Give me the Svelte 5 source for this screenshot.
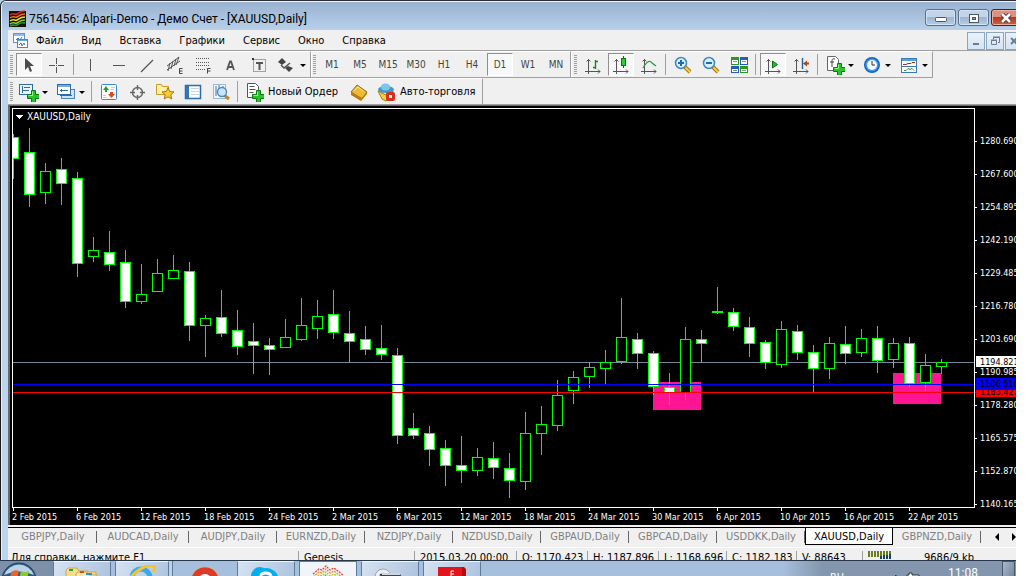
<script>
  const menus = ['Файл', 'Вид', 'Вставка', 'Графики', 'Сервис', 'Окно', 'Справка'];

  const drawTools = [
    { icon: 'cursor', label: 'Курсор', on: true },
    { icon: 'cross', label: 'Перекрестие' },
    { sep: true },
    { icon: 'vline', label: 'Вертикальная линия' },
    { icon: 'hline', label: 'Горизонтальная линия' },
    { icon: 'trend', label: 'Трендовая линия' },
    { icon: 'channel', label: 'Канал' },
    { icon: 'fibo', label: 'Фибоначчи' },
    { icon: 'letter', label: 'Текст' },
    { icon: 'textlabel', label: 'Метка' },
    { icon: 'arrows', label: 'Стрелки', drop: true }
  ];
  const frames = ['M1', 'M5', 'M15', 'M30', 'H1', 'H4', 'D1', 'W1', 'MN'];
  const chartTools = [
    { icon: 'bars', label: 'Бары' },
    { icon: 'candles', label: 'Свечи', on: true },
    { icon: 'line', label: 'Линия' },
    { sep: true },
    { icon: 'zoomin', label: 'Увеличить' },
    { icon: 'zoomout', label: 'Уменьшить' },
    { icon: 'tile', label: 'Расположить окна' },
    { sep: true },
    { icon: 'scroll', label: 'Автопрокрутка', on: true },
    { icon: 'shift', label: 'Сдвиг графика' },
    { sep: true },
    { icon: 'indicator', label: 'Индикаторы', drop: true },
    { icon: 'clock', label: 'Периоды', drop: true },
    { icon: 'template', label: 'Шаблоны', drop: true }
  ];
  const standardTools = [
    { icon: 'newchart', label: 'Новый график', drop: true },
    { icon: 'profiles', label: 'Профили', drop: true },
    { sep: true },
    { icon: 'market', label: 'Обзор рынка' },
    { icon: 'target', label: 'Окно данных' },
    { icon: 'navigator', label: 'Навигатор' },
    { icon: 'terminal', label: 'Терминал' },
    { icon: 'tester', label: 'Тестер' },
    { sep: true },
    { icon: 'order', text: 'Новый Ордер' },
    { icon: 'book', label: 'MetaEditor' },
    { icon: 'auto', text: 'Авто-торговля' }
  ];

  // high, body top, body bottom, low, falling (1), rising (0)
  const candles = [
    [134, 137, 159, 179, 1], [128, 152, 195, 207, 1], [163, 171, 193, 204, 0], [158, 169, 184, 205, 1],
    [172, 178, 264, 277, 1], [237, 250, 257, 262, 0], [231, 252, 265, 271, 1], [250, 262, 302, 308, 1],
    [264, 294, 302, 304, 0], [259, 273, 292, 292, 0], [255, 270, 279, 279, 0], [262, 271, 326, 341, 1],
    [315, 318, 326, 357, 0], [290, 317, 334, 337, 1], [310, 330, 347, 355, 1], [323, 341, 346, 374, 1],
    [338, 345, 350, 375, 1], [319, 337, 348, 348, 0], [298, 325, 340, 341, 0], [300, 316, 329, 339, 0],
    [290, 314, 333, 339, 1], [311, 333, 342, 362, 1], [326, 339, 350, 355, 1], [325, 348, 355, 360, 1],
    [348, 355, 436, 444, 1], [413, 428, 436, 439, 1], [426, 433, 450, 466, 1], [440, 448, 466, 486, 1],
    [436, 465, 471, 483, 1], [448, 457, 471, 476, 0], [442, 458, 468, 479, 1], [453, 468, 481, 498, 1],
    [412, 433, 482, 490, 0], [406, 424, 434, 455, 0], [380, 395, 426, 431, 0], [371, 377, 391, 404, 0],
    [362, 367, 377, 388, 0], [350, 362, 369, 384, 0], [298, 337, 362, 364, 0], [333, 339, 354, 369, 1],
    [351, 353, 387, 395, 1], [373, 387, 393, 405, 1], [327, 339, 393, 400, 0], [330, 339, 344, 363, 1],
    [287, 311, 313, 314, 1], [308, 312, 327, 331, 1], [317, 327, 344, 357, 1], [340, 342, 363, 369, 1],
    [321, 329, 365, 368, 0], [325, 331, 353, 360, 1], [345, 352, 369, 392, 1], [337, 343, 369, 379, 0],
    [326, 344, 354, 364, 1], [329, 338, 353, 357, 0], [326, 338, 361, 373, 1], [338, 343, 360, 368, 0],
    [337, 343, 384, 387, 1], [354, 365, 383, 391, 0], [359, 362, 367, 374, 0]
  ];
  const dates = ['2 Feb 2015', '6 Feb 2015', '12 Feb 2015', '18 Feb 2015', '24 Feb 2015', '2 Mar 2015', '6 Mar 2015',
    '12 Mar 2015', '18 Mar 2015', '24 Mar 2015', '30 Mar 2015', '6 Apr 2015', '10 Apr 2015', '16 Apr 2015', '22 Apr 2015'];
  const prices = ['1280.690', '1267.600', '1254.895', '1242.190', '1229.485', '1216.780', '1203.690', '1190.985',
    '1178.280', '1165.575', '1152.870', '1140.165'];

  const tabs = [
    ['GBPJPY', 88], ['AUDCAD', 92], ['AUDJPY', 88], ['EURNZD', 88], ['NZDJPY', 88], ['NZDUSD', 88],
    ['GBPAUD', 88], ['GBPCAD', 88], ['USDDKK', 88], ['XAUUSD', 88], ['GBPNZD', 88]
  ];
  const status = ['Для справки, нажмите F1', 'Genesis', '2015.03.20 00:00', 'O: 1170.423', 'H: 1187.896',
    'L: 1168.696', 'C: 1182.183', 'V: 88643', '9686/9 kb'];

  let frame = $state('D1');
  let tab = $state('XAUUSD');
</script>

{#snippet plus()}
  <path d="M12.5 8.5h4v4h4v4h-4v4h-4v-4h-4v-4h4z" fill="#27c52b" stroke="#087a10" /><path d="M13.5 9.5v4h-4" fill="none" stroke="#9cf08c" />
{/snippet}

{#snippet axes()}
  <path d="M5.5 4v15M2 16.5h15M3.5 6.500l2-2 2 2M15 14.5l2 2-2 2" fill="none" stroke="#555" />
{/snippet}

{#snippet icon(name)}
  <svg class="icon" width="20" height="20" viewBox="0 0 20 20" aria-hidden="true">
    {#if name === 'cursor'}
      <path d="M6 3v12l3-3 2 5 2-1-2-5h4z" fill="#4a4a4a" />
    {:else if name === 'cross'}
      <path d="M9.500 3v6M9.500 12v6M2 10.500h6M11 10.500h6" stroke="#555" fill="none" /><path d="M9 10h1v1h-1z" fill="#555" />
    {:else if name === 'vline'}
      <path d="M9.500 4v12" stroke="#555" />
    {:else if name === 'hline'}
      <path d="M4 10.500h12" stroke="#555" />
    {:else if name === 'trend'}
      <path d="M4 17L16 5" stroke="#555" stroke-width="1.200" />
    {:else if name === 'channel'}
      <path d="M2 11L14 2M2 15L15 6M5 8l-2 8M8 6l-2 8M11 4L9 11M14 2l-3 8" stroke="#555" fill="none" /><path d="M17.500 13.500h-3v5h3M14.500 16h3" stroke="#444" fill="none" />
    {:else if name === 'fibo'}
      <path d="M3 3.500h14M3 7.500h14M3 10.500h14M3 14.500h10" stroke="#555" stroke-dasharray="1 1" /><path d="M17.500 13.500h-3v5M14.500 16h3" stroke="#444" fill="none" />
    {:else if name === 'letter'}
      <path d="M6 15l3-8.500h1L13 15M7.500 12h4" stroke="#555" stroke-width="1.800" fill="none" />
    {:else if name === 'textlabel'}
      <rect x="4.500" y="4.500" width="12" height="12" fill="none" stroke="#555" stroke-dasharray="1 1" /><path d="M7 8h7M10.500 8v7" stroke="#555" stroke-width="2" /><path d="M3 3h2v2H3z" fill="#333" />
    {:else if name === 'arrows'}
      <path d="M1 7l4-4 4 4-4 3z" fill="#444" /><path d="M4 10l3 3 6-5" stroke="#555" fill="none" stroke-width="1.500" /><path d="M8 13l3-2 5 2-4 4z" fill="#444" />
    {:else if name === 'bars'}
      {@render axes()}<path d="M12.500 5v9M10 12.500h2M13 6.500h2" stroke="#138a1b" stroke-width="1.400" fill="none" />
    {:else if name === 'candles'}
      {@render axes()}<path d="M12.500 1v12" stroke="#0b7411" /><rect x="10.500" y="3.500" width="4" height="7" fill="#22d52b" stroke="#0b7411" />
    {:else if name === 'line'}
      {@render axes()}<path d="M4 13c4-7 7-8 9-5l4 3" stroke="#2b9a35" stroke-width="1.300" fill="none" />
    {:else if name === 'zoomin' || name === 'zoomout'}
      <path d="M12 12l5 5" stroke="#a87510" stroke-width="4" /><path d="M12 12l5 5" stroke="#f7cf45" stroke-width="2" />
      <circle cx="8" cy="8" r="5.500" fill="#d9efff" stroke="#3d86c8" stroke-width="1.500" /><path d="M5 8h6" stroke="#1f68b4" stroke-width="2" />
      {#if name === 'zoomin'}<path d="M8 5v6" stroke="#1f68b4" stroke-width="2" />{/if}
    {:else if name === 'tile'}
      <path d="M2 2h8v8H2zM11 11h8v7h-8z" fill="#2c9a20" /><path d="M11 2h8v8h-8zM2 11h8v7H2z" fill="#2558c8" />
      <path d="M3 5h6v4H3zM12 5h6v4h-6zM3 14h6v3H3zM12 14h6v3h-6z" fill="#fff" /><path d="M4 6.500h4M13 6.500h4M4 15.500h4M13 15.500h4" stroke="#7fa36c" />
    {:else if name === 'scroll'}
      {@render axes()}<path d="M9.500 6l5 3.500-5 3.500z" fill="#28b82f" stroke="#0b7411" />
    {:else if name === 'shift'}
      {@render axes()}<path d="M11.500 3v11" stroke="#225f9c" stroke-width="1.400" /><path d="M12 8.500l4-3v2h2v2h-2v2z" fill="#b8401a" />
    {:else if name === 'indicator'}
      <path d="M2.500 1.500h8l3 3v11h-11z" fill="#fff" stroke="#666" /><path d="M10 4c-3-1-3 1-3 3v5M5 7h4" stroke="#444" fill="none" />{@render plus()}
    {:else if name === 'clock'}
      <circle cx="10" cy="10" r="8" fill="#1464c4" /><circle cx="10" cy="10" r="6.500" fill="#3e9ae8" /><circle cx="10" cy="10" r="5" fill="#f4f9ff" /><path d="M10 6v4h3" stroke="#333" fill="none" />
    {:else if name === 'template'}
      <rect x="2.500" y="3.500" width="15" height="14" fill="#fff" stroke="#3b78b8" /><path d="M3 4h14v2H3z" fill="#5aa0e0" /><path d="M3 11.500h14" stroke="#3b78b8" />
      <path d="M4 9.500h3l2-1h3l1-1h3" stroke="#a0301c" fill="none" /><path d="M5 15.500h2l2-2 2 1 2-1 2 2" stroke="#2e8b3a" fill="none" />
    {:else if name === 'newchart'}
      <rect x=".5" y="2.500" width="13" height="10" fill="#eef6fd" stroke="#2f6ba6" /><path d="M3.500 4v7M3 8.500h7M5 5.500h6" stroke="#2f6ba6" fill="none" />{@render plus()}
    {:else if name === 'profiles'}
      <rect x="5.500" y="7.500" width="13" height="9" fill="#cfe4f7" stroke="#4a84bd" /><rect x="1.500" y="2.500" width="13" height="10" fill="#fff" stroke="#2f6ba6" /><path d="M2 3h12v2H2z" fill="#74aee4" /><path d="M4 8.500h8M5.500 7v3M4 13.500h12" stroke="#2f6ba6" />
    {:else if name === 'market'}
      <rect x="2.500" y="2.500" width="15" height="15" rx="1" fill="#fff" stroke="#3b87cf" /><path d="M4 8l3-4 3 4H8v2H6V8z" fill="#1da528" /><path d="M9 12h2v-2h3v2h2l-3.500 4z" fill="#e2451c" /><path d="M12 5.500h4M12 7.500h3M4 13.500h3M4 15.500h4" stroke="#ccc" />
    {:else if name === 'target'}
      <circle cx="10.500" cy="10.500" r="5" fill="none" stroke="#666" stroke-width="1.400" /><path d="M10.500 3v5M10.500 13v5M3 10.500h5M13 10.500h5" stroke="#666" stroke-width="1.400" />
    {:else if name === 'navigator'}
      <path d="M1.500 12.500v-10h5l1 2h6v8z" fill="#fff0a2" stroke="#c79b2c" /><path d="M13 5.500l1.800 4 4.200.4-3.200 2.900 1 4.200L13 14.800 9.200 17l1-4.200L7 9.900l4.200-.4z" fill="#f7ca35" stroke="#a87810" />
    {:else if name === 'terminal'}
      <rect x="2.500" y="3.500" width="15" height="13" fill="#fff" stroke="#2f6ba6" stroke-width="1.500" /><path d="M3 4h3v12H3z" fill="#3577b7" /><path d="M8 6.500h8M8 9.500h8M8 12.500h8" stroke="#c3d6e8" />
    {:else if name === 'tester'}
      <rect x="2.500" y="2.500" width="12" height="14" fill="#eef5fc" stroke="#9bb8d4" /><path d="M5 4v10M8 3v5M12 4v5" stroke="#46729a" /><path d="M13 13l5 4" stroke="#bd8a20" stroke-width="3" /><circle cx="11" cy="10" r="4.500" fill="#c9e6fa" stroke="#4c89b8" stroke-width="1.400" />
    {:else if name === 'order'}
      <path d="M3.500 1.500h8l3 3v11h-11z" fill="#fff" stroke="#555" /><path d="M5.500 4.500h5M5.500 7.500h6M5.500 10.500h4" stroke="#555" />{@render plus()}
    {:else if name === 'book'}
      <path d="M2 10l6-7 10 7-5 7z" fill="#edba32" stroke="#98690c" /><path d="M2 10v3l10 6 6-7v-2l-5 6z" fill="#b97b12" /><path d="M5 9l4-4 5 4" stroke="#ffe594" fill="none" />
    {:else if name === 'auto'}
      <path d="M2 9l8 4 7-4-2 7-5 3-4-2z" fill="#f3cd3e" stroke="#a87913" /><ellipse cx="10" cy="7.500" rx="8" ry="3.500" fill="#3e99ce" /><ellipse cx="9.500" cy="5" rx="4.500" ry="3.500" fill="#7cc6ec" /><rect x="10" y="10" width="9" height="9" rx="2" fill="#d8301b" /><path d="M13 13h3v3h-3z" fill="#fff" />
    {/if}
  </svg>
{/snippet}

{#snippet toolset(tools)}
  {#each tools as t}
    {#if t.sep}
      <span class="sep"></span>
    {:else}
      <button class="tool" class:on={t.on} class:drop={t.drop} class:wide={t.text} aria-label={t.label}>
        {@render icon(t.icon)}
        {#if t.text}<span>{t.text}</span>{/if}
        {#if t.drop}<i class="caret"></i>{/if}
      </button>
    {/if}
  {/each}
{/snippet}

<div class="screen">
  <main class="window">
    <header class="title">
      <svg width="17" height="17" viewBox="0 0 17 17" aria-hidden="true">
        <path d="M0 1h17v16H0z" fill="#161208" />
        <g fill="none" stroke-width="1.600">
          <path d="M1 5c3-3 5 0 7-1s3-3 8-3" stroke="#e3261a" /><path d="M1 8c3-3 5 0 7-1s3-3 8-3" stroke="#f0701c" />
          <path d="M1 11c3-3 5 0 7-1s3-3 8-3" stroke="#f4d929" /><path d="M1 14c3-3 5 0 7-1s3-3 8-3" stroke="#8bc72c" /><path d="M1 16c3-2 5 0 7-1s3-3 8-2" stroke="#1f9a38" />
        </g>
      </svg>
      <h1>7561456: Alpari-Demo - Демо Счет - [XAUUSD,Daily]</h1>
      <div class="winbtns">
        <button aria-label="Свернуть"><svg width="12" height="10" viewBox="0 0 12 10"><rect x=".5" y="4.500" width="11" height="4" rx="1" fill="#fff" stroke="#4a5566" /></svg></button>
        <button aria-label="Развернуть"><svg width="12" height="10" viewBox="0 0 12 10"><rect x="1.500" y="1.500" width="9" height="8" fill="#fff" stroke="#4a5566" /><rect x="4.500" y="4.500" width="3" height="2" fill="#8fa6c2" stroke="#4a5566" /></svg></button>
        <button class="close" aria-label="Закрыть"><svg width="12" height="10" viewBox="0 0 12 10"><path d="M2 1l8 8M10 1L2 9" stroke="#5c3040" stroke-width="4.500" /><path d="M2 1l8 8M10 1L2 9" stroke="#fff" stroke-width="2.500" /></svg></button>
      </div>
    </header>

    <nav class="menu">
      <svg width="15" height="15" viewBox="0 0 15 15" aria-hidden="true">
        <rect x=".5" y=".5" width="11" height="9" fill="#fff" stroke="#5a96dc" /><path d="M1 1h10v2H1z" fill="#8dbdf0" /><path d="M3 7l2-2 2 2 2-3" stroke="#3c78c0" fill="none" />
        <rect x="4.500" y="6.500" width="10" height="8" fill="#fff" stroke="#4a86d0" /><path d="M5 7h9v1H5z" fill="#6aa5e6" /><path d="M6 12l2-2 1 3 2-3 1 2" stroke="#3c78c0" fill="none" />
      </svg>
      {#each menus as m}<button>{m}</button>{/each}
      <div class="mdi">
        <button aria-label="Свернуть график"><svg width="10" height="10" viewBox="0 0 10 10"><path d="M2 8h6" stroke="#6d7d8e" stroke-width="2" /></svg></button>
        <button aria-label="Восстановить график"><svg width="10" height="10" viewBox="0 0 10 10"><path d="M3.500 3V1.500h6v5H8M1.500 4.500h5v4h-5zM1 4h6M3 1h7" fill="none" stroke="#6d7d8e" /></svg></button>
        <button aria-label="Закрыть график"><svg width="10" height="10" viewBox="0 0 10 10"><path d="M2 2l6 6M8 2L2 8" stroke="#6d7d8e" stroke-width="2" /></svg></button>
      </div>
    </nav>

    <div class="bar">
      <div class="group">{@render toolset(drawTools)}</div>
      <div class="group">
        {#each frames as f}
          <button class="tool" class:on={f === frame} onclick={() => (frame = f)}>{f}</button>
        {/each}
      </div>
      <div class="group">{@render toolset(chartTools)}</div>
    </div>
    <div class="bar second">
      <div class="group">{@render toolset(standardTools)}</div>
    </div>

    <svg class="chart" viewBox="10 106 1006 419" role="img" aria-label="XAUUSD,Daily">
      <rect x="10" y="106" width="1006" height="419" fill="#000" />
      <rect x="13" y="362" width="961" height="1" fill="#778899" />
      <path d="M653 382h48v28h-48zM893 373h48v31h-48z" fill="#ff1493" />
      <svg x="13" y="109" width="961" height="398" viewBox="13 109 961 398">
        {#each candles as [high, top, bottom, low, falling], i}
          {@const x = 13 + i * 16}
          <path d="M{x + 0.5} {high}V{low}" stroke="#0f0" />
          <rect x={x - 4.5} y={top + 0.5} width="10" height={bottom - top - 1} fill={falling ? '#fff' : '#000'} stroke="#0f0" />
        {/each}
      </svg>
      <rect x="13" y="384" width="963" height="1" fill="#00f" />
      <rect x="13" y="392" width="963" height="1" fill="#f00" />
      <path d="M12.500 507.500v-399H974.500v399z" fill="none" stroke="#fff" />
      <path d="M15 115h8l-4 4z" fill="#fff" />
      <text class="symbol" x="27" y="120">XAUUSD,Daily</text>
      {#each dates as d, i}
        <path d="M{13.5 + i * 64} 508v3" stroke="#fff" />
        <text x={12 + i * 64} y="520">{d}</text>
      {/each}
      {#each prices as p, i}
        <path d="M975 {141.5 + i * 33}h2" stroke="#fff" />
        <text x="980" y={144 + i * 33}>{p}</text>
      {/each}
      <rect x="976" y="356" width="40" height="11" fill="#fff" />
      <text class="dark" x="980" y="365">1194.821</text>
      <rect x="976" y="386" width="40" height="11" fill="#f00" />
      <text class="dark" x="980" y="395">1183.427</text>
      <rect x="976" y="378" width="40" height="12" fill="#00f" />
      <text class="dark" x="980" y="387">1186.516</text>
    </svg>

    <div class="tabs">
      {#each tabs as [name, w]}
        <button class:active={name === tab} style="flex-grow:{w}" onclick={() => (tab = name)}>{name},Daily</button>
      {/each}
      <div class="arrows">
        <svg width="24" height="8" viewBox="0 0 24 8" aria-hidden="true"><path d="M7 0v8L3 4zM20 0v8l4-4z" fill="#000" /></svg>
      </div>
    </div>

    <footer class="status">
      {#each status as text, i}
        <span>
          {#if i === 8}
            <svg width="24" height="10" viewBox="0 0 24 10" aria-hidden="true"><path d="M1 0v6M4 0v6M7 0v6M10 0v6M13 0v5M16 0v4M19 0v4M22 0v3" stroke="#6c7d18" stroke-width="2" /><path d="M13 5v3M16 4v4M19 4v4M22 3v5" stroke="#184060" stroke-width="2" /></svg>
          {/if}
          {text}
        </span>
      {/each}
    </footer>
  </main>

  <div class="taskbar">
    <button class="start" aria-label="Пуск">
      <svg width="38" height="34" viewBox="0 0 38 34"><circle cx="19" cy="18" r="17" fill="#2b5b83" stroke="#24415e" /><path d="M4 13a16 16 0 0130 0q-15-7-30 0z" fill="#b9d2e6" /><path d="M11 10q4-3 8-1l-2 8q-4-1-7 1z" fill="#e8662c" /><path d="M21 9q4 2 8 0l-2 8q-4 2-8 0z" fill="#8dc63f" /></svg>
    </button>
    <button class="task lit" aria-label="Проводник">
      <svg width="34" height="26" viewBox="0 0 34 26"><path d="M1 3l2-2h9l2 3h8l2 1h7v20H1z" fill="#f7dc8a" stroke="#c9a650" /><path d="M11 7l2-2h9l2 3h8v18H11z" fill="#fbe9ae" stroke="#c9a650" /><path d="M4 3h4" stroke="#2aa33a" stroke-width="2" /><path d="M15 5h4" stroke="#e04a2a" stroke-width="2" /><path d="M21 7h6" stroke="#2a90d8" stroke-width="2" /></svg>
    </button>
    <button class="task lit stack" aria-label="Internet Explorer">
      <svg width="30" height="28" viewBox="0 0 30 28"><circle cx="14" cy="13" r="9" fill="none" stroke="#3ba9e8" stroke-width="5" /><path d="M8 13h13" stroke="#3ba9e8" stroke-width="3" /><path d="M2 15C7 6 20-1 27 1c1 1 1 3-1 6" fill="none" stroke="#f3c52b" stroke-width="3" /></svg>
    </button>
    <button class="task plain" aria-label="Chrome">
      <svg width="30" height="30" viewBox="0 0 30 30"><circle cx="15" cy="15" r="14" fill="#f5cf29" /><path d="M2 10a14 14 0 0126 0H15l-5 8z" fill="#dc3a2a" /><path d="M2 10a14 14 0 0010 19l3-8-8-4z" fill="#36a04c" /><circle cx="15" cy="15" r="6" fill="#3f83e6" stroke="#fff" stroke-width="2" /></svg>
    </button>
    <button class="task lit" aria-label="Skype">
      <svg width="30" height="30" viewBox="0 0 30 30"><circle cx="9" cy="9" r="9" fill="#00aff0" /><circle cx="15" cy="14" r="13" fill="#00aff0" /><path d="M20 9c-1-4-10-4-10 0s10 2 10 6-9 4-10 0" stroke="#fff" stroke-width="3" fill="none" /></svg>
    </button>
    <button class="task bright" aria-label="MetaTrader">
      <svg width="32" height="26" viewBox="0 0 32 26" fill="none" stroke-width="1.300" stroke-dasharray="2 1"><path d="M1 9l6-5 3 1 4-4 4 4 4-2 9 7" stroke="#e0402a" /><path d="M1 12l6-5 3 1 4-4 4 4 4-2 9 7" stroke="#ee8a2c" /><path d="M1 15l6-5 3 1 4-4 4 4 4-2 9 7" stroke="#c9b92a" /><path d="M1 18l6-5 3 1 4-4 4 4 4-2 9 7" stroke="#73a83a" /></svg>
    </button>
    <button class="task lit" aria-label="Диск">
      <svg width="32" height="26" viewBox="0 0 32 26"><circle cx="9" cy="10" r="8" fill="#eef1f4" stroke="#9aa3ad" /><circle cx="9" cy="10" r="4" fill="none" stroke="#bbb" /><path d="M6 7h20l2 3v12H6z" fill="#3d4650" /><path d="M8 6h18v2H8z" fill="#cfd6dd" /></svg>
    </button>
    <button class="task lit" aria-label="Книга">
      <svg width="32" height="26" viewBox="0 0 32 26"><path d="M2 0h26l2 2v24H2z" fill="#b00d10" /><path d="M2 0h24v26H2z" fill="#e3151a" /><path d="M18 4h-3v7M15 7h3" stroke="#fff" fill="none" /></svg>
    </button>
    <div class="tray">
      <span class="lang">RU</span>
      <svg width="32" height="10" viewBox="0 0 32 10" aria-hidden="true"><path d="M0 9l4-5v5zM15 4h2V2h3v2h7v5H15z" fill="#fff" stroke="#333" /></svg>
      <time>11:08</time>
      <i class="desk"></i>
    </div>
  </div>
</div>

<style>
  :global(body) { margin: 0; background: #fff; }
  .screen {
    margin-right: 16px;
    overflow: hidden;
    font: 11px/14px "DejaVu Sans Condensed", "Noto Sans", sans-serif;
    color: #000;
    background: #b9d1ea;
  }
  button { font: inherit; color: inherit; background: none; border: 0; padding: 0; margin: 0; }
  svg { display: block; flex: none; }
  .window {
    border-left: 1px solid #1a1a1a;
    border-top: 1px solid #2c2c34;
    border-top-left-radius: 6px;
    padding-left: 7px;
    background: #bdd4ee;
    box-shadow: inset 1px 1px 0 #eef4fb;
  }
  .title {
    display: flex;
    align-items: center;
    gap: 3px;
    height: 29px;
    box-sizing: border-box;
    margin-left: -6px;
    padding: 6px 0 0 7px;
    background: linear-gradient(#eef4fb 1px, #98b2d0 1px, #b8d0ea);
    border-top-left-radius: 5px;
  }
  h1 { flex: 1; margin: 0; font: 12px/16px Roboto, "Open Sans", sans-serif; white-space: nowrap; }
  .winbtns { display: flex; gap: 2px; margin: -2px -15px 0 0; }
  .winbtns button {
    display: grid;
    place-items: center;
    width: 31px;
    height: 17px;
    border: 1px solid #5b6f8a;
    border-radius: 3px;
    box-shadow: inset 0 0 0 1px #d4e3f3;
    background: linear-gradient(#c3d4e8 50%, #9cb5d2 50%, #b5cce6);
  }
  .winbtns .close {
    width: 40px;
    padding-right: 10px;
    border-color: #5c1a1a;
    box-shadow: inset 0 0 0 1px #eab0a0;
    background: linear-gradient(#dd9080 50%, #b93a20 50%, #cc6040);
  }
  .menu {
    display: flex;
    align-items: center;
    gap: 18px;
    height: 19px;
    padding: 1px 0 0 5px;
    background: #f0f0f0;
    border-bottom: 1px solid #a0a0a0;
  }
  .menu svg + button { margin-left: -10px; }
  .mdi { display: flex; gap: 1px; margin: 0 -7px 0 auto; }
  .mdi button {
    display: grid;
    place-items: center;
    width: 18px;
    height: 18px;
    margin: 0;
    border: 1px solid #8fa5bb;
    background: linear-gradient(#e9f2fb, #d3e4f4);
  }

  .bar { display: flex; height: 27px; background: #f0f0f0; }
  .group {
    display: flex;
    align-items: center;
    box-sizing: border-box;
    border-top: 1px solid #fff;
    border-right: 1px solid #a0a0a0;
    border-bottom: 1px solid #a0a0a0;
    padding-left: 2px;
    color: #444;
  }
  .group::before {
    content: "";
    width: 3px;
    height: 19px;
    margin-right: 2px;
    background: repeating-linear-gradient(#a0a0a0 0 1px, #f0f0f0 1px 2px);
  }
  .group + .group { box-shadow: inset 1px 0 0 #fff; }
  .group:nth-child(3) { padding-left: 3px; }
  .second .group { border-bottom: 0; color: #000; }
  .second { border-bottom: 1px solid #a0a0a0; height: 26px; }
  .tool {
    display: flex;
    align-items: center;
    justify-content: center;
    gap: 3px;
    box-sizing: border-box;
    width: 28px;
    height: 23px;
    padding-top: 1px;
    font-size: 10px;
  }
  .tool.on {
    width: 26px;
    margin: 0 1px;
    border: 1px solid;
    border-color: #8f8f8f #fff #fff #8f8f8f;
    background: #f8f8f8;
  }
  .tool.drop { width: 37px; }
  .tool.wide { width: auto; gap: 4px; padding: 1px 7px 0 3px; font-size: 11px; }
  .caret { border: 3px solid transparent; border-top-color: #000; border-bottom: 0; }
  .sep { width: 1px; height: 21px; margin: 0 3px 0 2px; background: #a0a0a0; }

  .chart {
    width: 100%;
    height: auto;
    box-sizing: border-box;
    border-top: 1px solid #6a6a6a;
    border-left: 2px solid #6a6a6a;
    background: #000;
    shape-rendering: crispEdges;
  }
  .chart text { font: 9px "DejaVu Sans Condensed", "Noto Sans", sans-serif; fill: #fff; }
  .chart .symbol { font-size: 10px; }
  .chart .dark { fill: #000; }

  .tabs {
    display: flex;
    height: 17px;
    border-top: 1px solid #000;
    border-bottom: 1px solid #fff;
    padding: 0 0 2px 1px;
    background: #f0f0f0;
    box-shadow: 0 -2px 0 #f0f0f0;
    margin-top: 2px;
    color: #808080;
  }
  .tabs button {
    flex: 1 1 0;
    white-space: nowrap;
    background: linear-gradient(#666, #666) right 3px / 1px 12px no-repeat;
  }
  .tabs .active { color: #000; background: #fff; box-shadow: inset 1px 0 0 #000, inset -1px -1px 0 #000; }
  .arrows { flex: 35 1 0; display: flex; align-items: center; justify-content: flex-end; }
  .status {
    display: grid;
    grid-template-columns: 290fr 116fr 102fr 71fr 71fr 68fr 70fr 66fr 154fr;
    height: 12px;
    overflow: hidden;
    background: #f0f0f0;
  }
  .status span {
    display: flex;
    gap: 32px;
    box-sizing: border-box;
    min-width: 0;
    height: 20px;
    margin-top: 3px;
    padding-left: 5px;
    border-left: 1px solid #a0a0a0;
    white-space: nowrap;
  }
  .status span:first-child { padding-left: 3px; border-left: 0; }

  .taskbar {
    display: flex;
    height: 15px;
    overflow: hidden;
    border-top: 1px solid #27374b;
    background: linear-gradient(90deg, #a6bfdc 77%, #8396ad 81%);
  }
  .start { display: flex; width: 53px; padding: 1px 0 0; background: #7d90aa; }
  .task { display: flex; justify-content: center; box-sizing: border-box; width: 58px; margin-right: 4px; padding-top: 5px; height: 30px; }
  .lit { border: 1px solid #5f7a9b; border-top-color: #eef5fc; background: linear-gradient(115deg, #d5e2f1, #a9c0dc); }
  .bright { border: 1px solid #5f7a9b; background: #f1f5fa; padding-top: 3px; }
  .stack { width: 54px; margin-right: 5px; padding-top: 3px; box-shadow: 3px 0 0 #bdd0e6, 4px 0 0 #5f7a9b; }
  .plain { width: 62px; margin: 0 1px 0 0; }
  .tray { display: flex; flex: 1; justify-content: flex-end; align-items: flex-start; gap: 24px; color: #fff; padding-top: 5px; }
  .tray svg { margin-top: 5px; }
  .lang { padding-top: 5px; margin-right: 24px; }
  .tray time { font: 12px/14px Roboto, "Open Sans", sans-serif; }
  .desk { width: 13px; height: 30px; margin: -5px 1px 0 0; box-sizing: border-box; border: 1px solid #46566c; background: linear-gradient(115deg, #a9b8ca, #64748b); }
</style>
